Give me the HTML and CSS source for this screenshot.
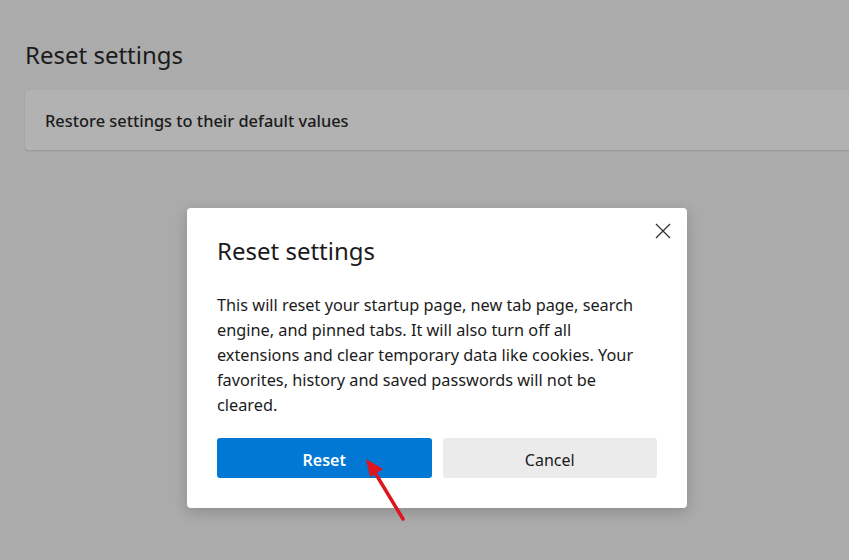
FILE: index.html
```html
<!DOCTYPE html>
<html lang="en">
<head>
    <meta charset="UTF-8">
    <title>Reset settings</title>
    <link rel="stylesheet" href="styles.css">
</head>
<body>
    <div class="page">
        <h1 class="page-title">Reset settings</h1>
        <div class="card">
            <span>Restore settings to their default values</span>
        </div>
    </div>

    <!-- Dialog laid over the dimmed settings page -->
    <div class="dialog">
        <button class="close" aria-label="Close">
            <svg width="16" height="16" viewBox="0 0 16 16">
                <path d="M1 1L15 15M15 1L1 15" stroke="#333" stroke-width="1.3" fill="none"/>
            </svg>
        </button>
        <h2 class="dialog-title">Reset settings</h2>
        <p class="dialog-text">This will reset your startup page, new tab page, search engine, and pinned tabs. It will also turn off all extensions and clear temporary data like cookies. Your favorites, history and saved passwords will not be cleared.</p>
        <div class="actions">
            <button class="btn primary">Reset</button>
            <button class="btn secondary">Cancel</button>
        </div>
    </div>

    <!-- Red annotation arrow -->
    <svg class="arrow" width="60" height="80" viewBox="0 0 60 80">
        <line x1="43" y1="69" x2="14" y2="21" stroke="#e0141e" stroke-width="3.5" stroke-linecap="round"/>
        <polygon points="6,9 23,19 10,27" fill="#e0141e"/>
    </svg>
</body>
</html>
```

FILE: styles.css
```css
body {
    margin: 0;
    height: 560px;
    overflow: hidden;
    background-color: #ababab;
    font-family: "Noto Sans", "Open Sans", sans-serif;
    color: #1b1b1b;
}

.page {
    padding: 38px 0 0 25px;
}

.page-title {
    margin: 0 0 18px;
    font-size: 24px;
    font-weight: 400;
    line-height: 34px;
}

.card {
    width: 840px;
    height: 60px;
    display: flex;
    align-items: center;
    padding-left: 20px;
    box-sizing: border-box;
    background-color: #b2b2b2;
    border-radius: 4px;
    box-shadow: 0 1px 2px rgba(0, 0, 0, 0.12);
    font-size: 16.4px;
    font-weight: 500;
}

.dialog {
    position: absolute;
    left: 187px;
    top: 208px;
    width: 500px;
    box-sizing: border-box;
    padding: 26px 30px 30px;
    background-color: #fff;
    border-radius: 4px;
    box-shadow: 0 4px 14px rgba(0, 0, 0, 0.18);
}

.close {
    position: absolute;
    top: 11px;
    right: 12px;
    width: 24px;
    height: 24px;
    padding: 0;
    border: none;
    background: none;
    display: flex;
    align-items: center;
    justify-content: center;
}

.dialog-title {
    margin: 0 0 25px;
    font-size: 24px;
    font-weight: 400;
    line-height: 34px;
}

.dialog-text {
    max-width: 428px;
    margin: 0 0 20px;
    font-size: 16.3px;
    line-height: 25px;
}

.actions {
    display: grid;
    grid-template-columns: 1fr 1fr;
    gap: 11px;
}

.btn {
    height: 40px;
    padding: 3px 0 0;
    border: none;
    border-radius: 3px;
    font-family: "Noto Sans", sans-serif;
    font-size: 16px;
}

.primary {
    background-color: #0078d4;
    color: #fff;
    font-weight: 600;
}

.secondary {
    background-color: #ebebeb;
    color: #1b1b1b;
}

.arrow {
    position: absolute;
    left: 360px;
    top: 450px;
}
```
